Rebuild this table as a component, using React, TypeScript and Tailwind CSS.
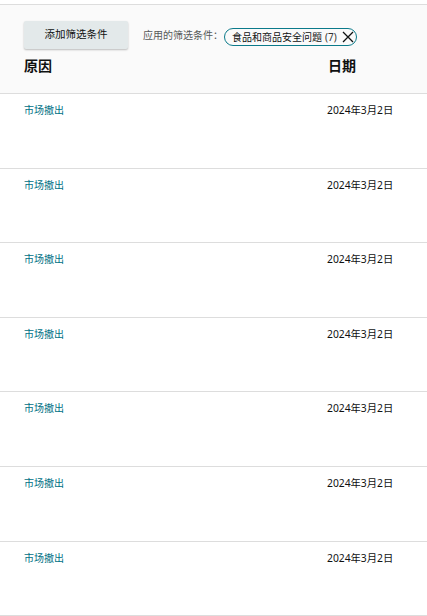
const rows = Array.from({ length: 7 }, () => ({
  reason: "市场撤出",
  date: "2024年3月2日",
}));

const font = "font-['Noto_Sans','Noto_Sans_CJK_SC',sans-serif]";

export default function App() {
  return (
    <div className={`h-[616px] w-[427px] overflow-hidden bg-white ${font}`}>
      <div className="h-[4px] bg-white" />
      <div className="border-y border-[#dddddd] bg-[#fafafa] px-6 pb-[17px] pt-4">
        <div className="flex items-center">
          <button className="h-7 w-[104px] rounded-[2px] bg-[#e3e9ea] text-[10.5px] text-[#0f1111] shadow-[0_1px_2px_rgba(0,0,0,0.25)]">
            添加筛选条件
          </button>
          <span className="ml-[15px] text-[10px] text-[#565959]">应用的筛选条件：</span>
          <span className="ml-[1px] mt-[4px] flex h-[18px] items-center rounded-full border border-[#0b7a8a] pl-[7px] pr-[2px] text-[10px] text-[#0f1111]">
            食品和商品安全问题 <span className="ml-[3px] text-[#333]">(7)</span>
            <svg className="ml-[5px]" width="12" height="12" viewBox="0 0 12 12">
              <path d="M1 1 L11 11 M11 1 L1 11" stroke="#0f1111" strokeWidth="1.3" fill="none" />
            </svg>
          </span>
        </div>
        <div className="mt-[7px] grid grid-cols-[1fr_76px] text-[14px] font-bold leading-5 text-[#0f1111]">
          <span>原因</span>
          <span className="pl-px">日期</span>
        </div>
      </div>
      {rows.map((r, i) => (
        <div
          key={i}
          className="grid h-[74.6px] grid-cols-[1fr_76px] border-b border-[#dddddd] px-6 pt-[8px] text-[10px] leading-4"
        >
          <span className="text-[#007185]">{r.reason}</span>
          <span className="text-[10.3px] text-[#0f1111]">{r.date}</span>
        </div>
      ))}
    </div>
  );
}
